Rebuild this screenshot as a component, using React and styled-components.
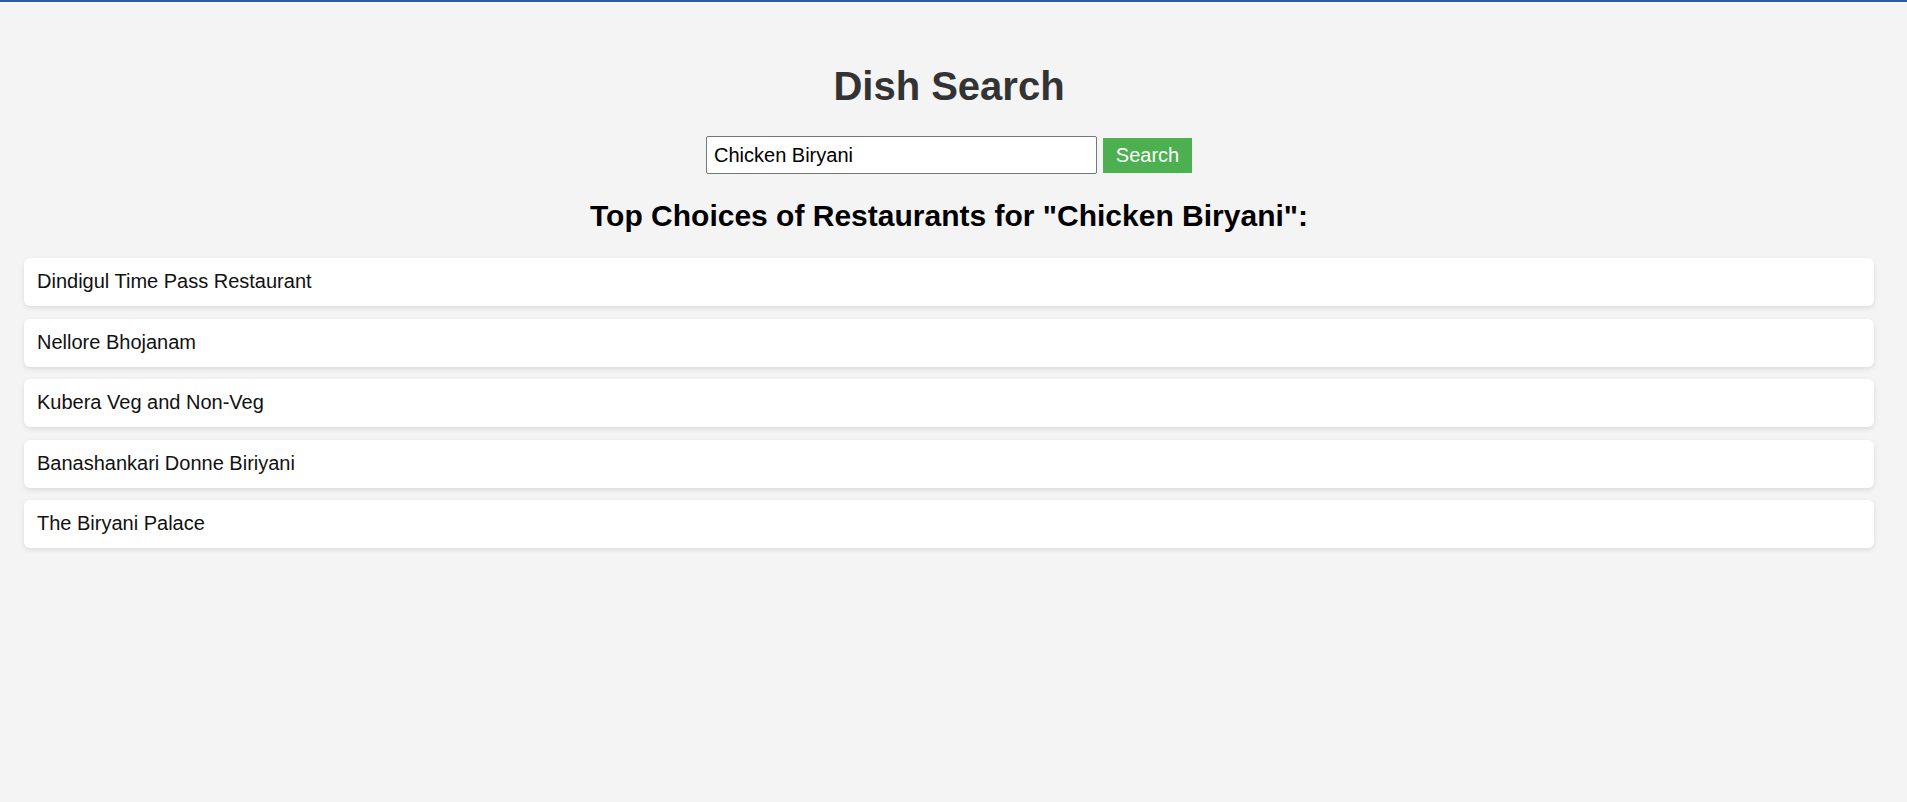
import React, { useState } from 'react';
import styled, { createGlobalStyle } from 'styled-components';

const GlobalStyle = createGlobalStyle`
  html, body {
    margin: 0;
    padding: 0;
  }
  body {
    background-color: #f4f4f4;
    border-top: 2px solid #2a5ca4;
    font-family: "Liberation Sans", Arial, sans-serif;
    min-height: 798px;
  }
`;

const Page = styled.div`
  padding: 0 33px 0 24px;
`;

const Title = styled.h1`
  margin: 61px 0 0;
  text-align: center;
  font-size: 40px;
  line-height: 46px;
  font-weight: 700;
  color: #333;
`;

const SearchForm = styled.form`
  display: flex;
  justify-content: center;
  align-items: center;
  gap: 6px;
  margin-top: 27px;
`;

const SearchInput = styled.input`
  box-sizing: border-box;
  width: 391px;
  height: 38px;
  padding: 0 7px;
  border: 1px solid #767676;
  border-radius: 2px;
  background: #fff;
  font-family: inherit;
  font-size: 20px;
  color: #000;
  outline: none;
`;

const SearchButton = styled.button`
  box-sizing: border-box;
  width: 89px;
  height: 35px;
  padding: 0;
  border: none;
  background-color: #4caf50;
  color: #fff;
  font-family: inherit;
  font-size: 20px;
  cursor: pointer;
`;

const ResultsTitle = styled.h2`
  margin: 25px 0 0;
  text-align: center;
  font-size: 30px;
  line-height: 34px;
  font-weight: 700;
  color: #000;
`;

const ResultList = styled.ul`
  list-style: none;
  margin: 25px 0 0;
  padding: 0;
  display: flex;
  flex-direction: column;
  gap: 12.5px;
`;

const ResultItem = styled.li`
  background-color: #fff;
  border-radius: 6px;
  box-shadow: 0 2px 5px rgba(0, 0, 0, 0.1);
  padding: 12px 13px 13px;
  font-size: 20px;
  line-height: 23px;
  color: #111;
`;

const restaurants = [
  'Dindigul Time Pass Restaurant',
  'Nellore Bhojanam',
  'Kubera Veg and Non-Veg',
  'Banashankari Donne Biriyani',
  'The Biryani Palace',
];

function App() {
  const [dish, setDish] = useState('Chicken Biryani');
  const [query, setQuery] = useState('Chicken Biryani');

  function handleSubmit(event) {
    event.preventDefault();
    setQuery(dish);
  }

  return (
    <>
      <GlobalStyle />
      <Page>
        <Title>Dish Search</Title>
        <SearchForm onSubmit={handleSubmit}>
          <SearchInput
            type="text"
            value={dish}
            onChange={event => setDish(event.target.value)}
          />
          <SearchButton type="submit">Search</SearchButton>
        </SearchForm>
        <ResultsTitle>Top Choices of Restaurants for "{query}":</ResultsTitle>
        <ResultList>
          {restaurants.map(name => (
            <ResultItem key={name}>{name}</ResultItem>
          ))}
        </ResultList>
      </Page>
    </>
  );
}

export default App;
